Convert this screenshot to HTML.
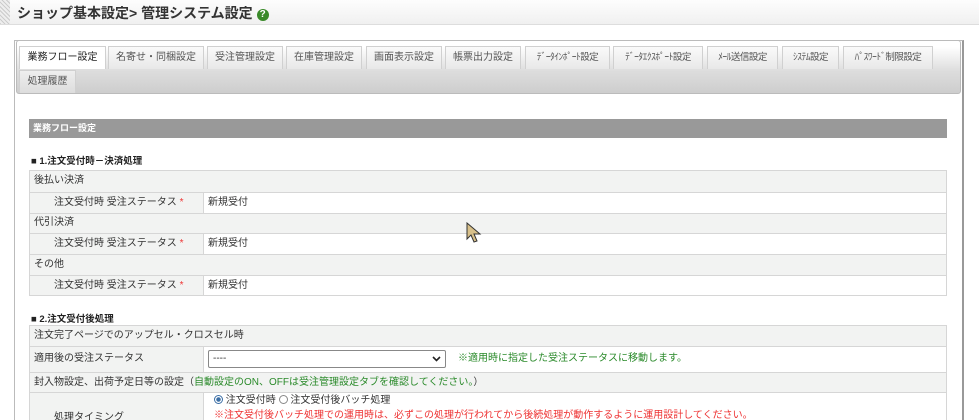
<!DOCTYPE html>
<html><head><meta charset="utf-8"><style>
*{margin:0;padding:0;box-sizing:border-box}
html,body{width:979px;height:420px;overflow:hidden}
body{background:#fff;font-family:"Liberation Sans","Noto Sans CJK JP",sans-serif;font-size:10px;color:#333;position:relative}
.a{position:absolute}
.hdr{left:0;top:0;width:979px;height:25px;background:linear-gradient(#fdfdfd,#f0f0f0);border-bottom:1px solid #ddd}
.stripe{left:0;top:0;width:10px;height:24px;background:repeating-linear-gradient(45deg,#ccc 0 1px,#eee 1px 3px)}
.title{left:17px;top:3px;font-size:14px;font-weight:bold;color:#333}
.q{display:inline-block;width:12px;height:12px;border-radius:50%;background:#3a8a2a;color:#fff;font-size:10px;text-align:center;line-height:12px;vertical-align:1px;margin-left:4px}
.box{left:14px;top:40px;width:950px;height:390px;border:1px solid #bbb;border-right:2px solid #999}
.panel{left:16px;top:40px;width:945px;height:54px;border:1px solid #bbb;border-radius:3px;background:linear-gradient(#fff 0,#fff 6px,#ddd 30px,#ccc 54px)}
.tab{height:23px;background:linear-gradient(#fafafa,#e8e8e8);border:1px solid #d0d0d0;border-bottom:none;text-align:center;line-height:22px;font-size:10px;color:#555;white-space:nowrap}
.tab.on{background:#fff;color:#222}
.sm{font-size:9.5px;letter-spacing:-0.5px}
.bar{left:29px;top:119px;width:918px;height:19px;background:#999;color:#fff;font-size:9px;font-weight:bold;line-height:19px;padding-left:4px}
.h3{font-size:9.5px;font-weight:bold;color:#222}
.row{left:29px;width:918px;border:1px solid #d6d6d6;border-bottom:none;background:#f2f3f2;line-height:20px;padding-left:4px;font-size:10px}
.l{left:29px;width:175px;background:#f2f3f2;border:1px solid #d6d6d6;border-bottom:none;font-size:10px}
.r{left:204px;width:743px;background:#fff;border:1px solid #d6d6d6;border-left:none;border-bottom:none;font-size:10px;padding-left:4px}
.red{color:#e33}
.grn{color:#2a8a2a}
</style></head><body>
<div class="a hdr"></div><div class="a stripe"></div>
<div class="a title">ショップ基本設定&gt; 管理システム設定<span class="q">?</span></div>
<div class="a box"></div>
<div class="a panel"></div>
<div class="a tab on" style="left:19px;top:46px;width:87px">業務フロー設定</div>
<div class="a tab" style="left:108px;top:46px;width:96px">名寄せ・同梱設定</div>
<div class="a tab" style="left:207px;top:46px;width:76px">受注管理設定</div>
<div class="a tab" style="left:286px;top:46px;width:76px">在庫管理設定</div>
<div class="a tab" style="left:366px;top:46px;width:76px">画面表示設定</div>
<div class="a tab" style="left:445px;top:46px;width:76px">帳票出力設定</div>
<div class="a tab sm" style="left:525px;top:46px;width:85px">ﾃﾞｰﾀｲﾝﾎﾟｰﾄ設定</div>
<div class="a tab sm" style="left:613px;top:46px;width:90px">ﾃﾞｰﾀｴｸｽﾎﾟｰﾄ設定</div>
<div class="a tab sm" style="left:707px;top:46px;width:71px">ﾒｰﾙ送信設定</div>
<div class="a tab sm" style="left:782px;top:46px;width:57px">ｼｽﾃﾑ設定</div>
<div class="a tab sm" style="left:843px;top:46px;width:90px">ﾊﾟｽﾜｰﾄﾞ制限設定</div>
<div class="a tab" style="left:19px;top:70px;width:57px;height:23px;background:linear-gradient(#eee,#ddd)">処理履歴</div>
<div class="a bar">業務フロー設定</div>
<div class="a h3" style="left:31px;top:153px">■ 1.注文受付時－決済処理</div>
<div class="a row" style="top:170px;height:22px">後払い決済</div>
<div class="a l" style="top:192px;height:21px;line-height:20px;padding-left:24px">注文受付時 受注ステータス <span class="red">*</span></div>
<div class="a r" style="top:192px;height:21px;line-height:20px">新規受付</div>
<div class="a row" style="top:213px;height:20px;line-height:18px">代引決済</div>
<div class="a l" style="top:233px;height:21px;line-height:20px;padding-left:24px">注文受付時 受注ステータス <span class="red">*</span></div>
<div class="a r" style="top:233px;height:21px;line-height:20px">新規受付</div>
<div class="a row" style="top:254px;height:21px;line-height:19px">その他</div>
<div class="a l" style="top:275px;height:21px;line-height:20px;padding-left:24px;border-bottom:1px solid #d6d6d6">注文受付時 受注ステータス <span class="red">*</span></div>
<div class="a r" style="top:275px;height:21px;line-height:20px;border-bottom:1px solid #d6d6d6">新規受付</div>
<div class="a h3" style="left:31px;top:311px">■ 2.注文受付後処理</div>
<div class="a row" style="top:325px;height:21px;line-height:19px">注文完了ページでのアップセル・クロスセル時</div>
<div class="a l" style="top:346px;height:26px;line-height:24px;padding-left:4px">適用後の受注ステータス</div>
<div class="a r" style="top:346px;height:26px;padding-left:0">
<div class="a" style="left:4px;top:3px;width:238px;height:18px;border:1px solid #888;border-radius:2px;background:#fff;line-height:16px;padding-left:4px">----<svg class="a" style="right:4px;top:5px" width="9" height="6" viewBox="0 0 9 6"><path d="M1 1 L4.5 4.5 L8 1" fill="none" stroke="#222" stroke-width="1.6"/></svg></div>
<div class="a grn" style="left:254px;top:0;line-height:24px;white-space:nowrap">※適用時に指定した受注ステータスに移動します。</div></div>
<div class="a row" style="top:372px;height:20px;line-height:19px">封入物設定、出荷予定日等の設定（<span class="grn">自動設定のON、OFFは受注管理設定タブを確認してください。</span>）</div>
<div class="a l" style="top:392px;height:30px;line-height:50px;padding-left:24px">処理タイミング</div>
<div class="a r" style="top:392px;height:30px;padding-left:10px;line-height:15px;white-space:nowrap">
<span style="display:inline-block;width:9px;height:9px;border-radius:50%;border:1px solid #3a6ea5;background:radial-gradient(#3a6ea5 0 2px,#fff 2.5px);vertical-align:-1px"></span> 注文受付時 <span style="display:inline-block;width:9px;height:9px;border-radius:50%;border:1px solid #888;vertical-align:-1px"></span> 注文受付後バッチ処理<br><span class="red">※注文受付後バッチ処理での運用時は、必ずこの処理が行われてから後続処理が動作するように運用設計してください。</span></div>
<svg class="a" style="left:466px;top:222px" width="16" height="22" viewBox="0 0 16 22"><path d="M1 1 L1 17 L5 13 L8 20 L11 19 L8 12 L14 12 Z" fill="#d8c08a" stroke="#333" stroke-width="1"/></svg>
</body></html>
